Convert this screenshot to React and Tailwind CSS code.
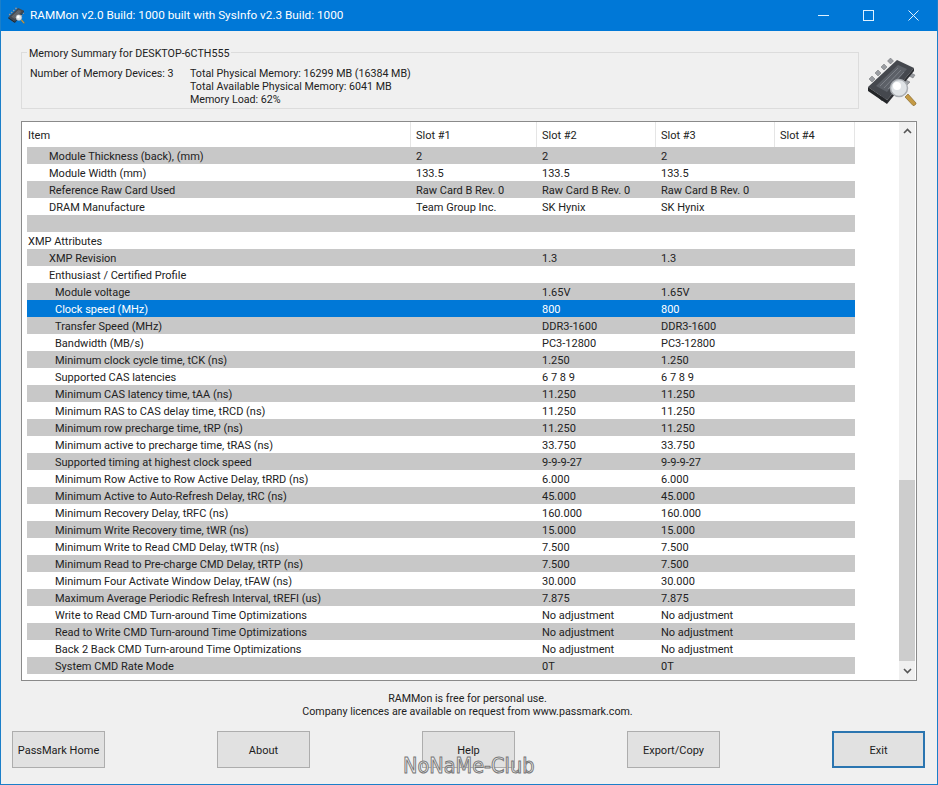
import React from "react";

const rows = [
	{ item: "Module Thickness (back), (mm)", lvl: 1, s: ["2", "2", "2"] },
	{ item: "Module Width (mm)", lvl: 1, s: ["133.5", "133.5", "133.5"] },
	{ item: "Reference Raw Card Used", lvl: 1, s: ["Raw Card B Rev. 0", "Raw Card B Rev. 0", "Raw Card B Rev. 0"] },
	{ item: "DRAM Manufacture", lvl: 1, s: ["Team Group Inc.", "SK Hynix", "SK Hynix"] },
	{ item: "", lvl: 0, s: ["", "", ""] },
	{ item: "XMP Attributes", lvl: 0, s: ["", "", ""] },
	{ item: "XMP Revision", lvl: 1, s: ["", "1.3", "1.3"] },
	{ item: "Enthusiast / Certified Profile", lvl: 1, s: ["", "", ""] },
	{ item: "Module voltage", lvl: 2, s: ["", "1.65V", "1.65V"] },
	{ item: "Clock speed (MHz)", lvl: 2, s: ["", "800", "800"], selected: true },
	{ item: "Transfer Speed (MHz)", lvl: 2, s: ["", "DDR3-1600", "DDR3-1600"] },
	{ item: "Bandwidth (MB/s)", lvl: 2, s: ["", "PC3-12800", "PC3-12800"] },
	{ item: "Minimum clock cycle time, tCK (ns)", lvl: 2, s: ["", "1.250", "1.250"] },
	{ item: "Supported CAS latencies", lvl: 2, s: ["", "6 7 8 9", "6 7 8 9"] },
	{ item: "Minimum CAS latency time, tAA (ns)", lvl: 2, s: ["", "11.250", "11.250"] },
	{ item: "Minimum RAS to CAS delay time, tRCD (ns)", lvl: 2, s: ["", "11.250", "11.250"] },
	{ item: "Minimum row precharge time, tRP (ns)", lvl: 2, s: ["", "11.250", "11.250"] },
	{ item: "Minimum active to precharge time, tRAS (ns)", lvl: 2, s: ["", "33.750", "33.750"] },
	{ item: "Supported timing at highest clock speed", lvl: 2, s: ["", "9-9-9-27", "9-9-9-27"] },
	{ item: "Minimum Row Active to Row Active Delay, tRRD (ns)", lvl: 2, s: ["", "6.000", "6.000"] },
	{ item: "Minimum Active to Auto-Refresh Delay, tRC (ns)", lvl: 2, s: ["", "45.000", "45.000"] },
	{ item: "Minimum Recovery Delay, tRFC (ns)", lvl: 2, s: ["", "160.000", "160.000"] },
	{ item: "Minimum Write Recovery time, tWR (ns)", lvl: 2, s: ["", "15.000", "15.000"] },
	{ item: "Minimum Write to Read CMD Delay, tWTR (ns)", lvl: 2, s: ["", "7.500", "7.500"] },
	{ item: "Minimum Read to Pre-charge CMD Delay, tRTP (ns)", lvl: 2, s: ["", "7.500", "7.500"] },
	{ item: "Minimum Four Activate Window Delay, tFAW (ns)", lvl: 2, s: ["", "30.000", "30.000"] },
	{ item: "Maximum Average Periodic Refresh Interval, tREFI (us)", lvl: 2, s: ["", "7.875", "7.875"] },
	{ item: "Write to Read CMD Turn-around Time Optimizations", lvl: 2, s: ["", "No adjustment", "No adjustment"] },
	{ item: "Read to Write CMD Turn-around Time Optimizations", lvl: 2, s: ["", "No adjustment", "No adjustment"] },
	{ item: "Back 2 Back CMD Turn-around Time Optimizations", lvl: 2, s: ["", "No adjustment", "No adjustment"] },
	{ item: "System CMD Rate Mode", lvl: 2, s: ["", "0T", "0T"] },
];

const indent = ["pl-[1px]", "pl-[22px]", "pl-[28px]"];

const ChipIcon = ({ className }) => (
	<svg viewBox="0 0 50 50" className={className}>
		<g fill="#9a9da2" stroke="#55585c" strokeWidth="0.4">
			<path d="M5 25l-3-3 3-3 3 3z" />
			<path d="M11 19l-3-3 3-3 3 3z" />
			<path d="M17 13l-3-3 3-3 3 3z" />
			<path d="M23.500 7l-3-3 3-3 3 3z" />
			<path d="M12 41l3 3 3-3-3-3z" />
			<path d="M36 26l4 2 3-3-4-2z" />
			<path d="M42 19l4 2 2-3-4-2z" />
		</g>
		<path d="M1 30L30 3l17 8-27 32z" fill="#45484e" />
		<path d="M1 30l19 13v4L1 34z" fill="#232528" />
		<path d="M20 43l27-32v3L20 47z" fill="#2c2e32" />
		<path d="M9 29L31 8l9 4-20 23z" fill="#5c6067" />
		<path d="M13 29L31 11M17 31L34 13M21 32L37 15" stroke="#8a8e95" strokeWidth="0.7" />
		<path d="M38 40l3-3 8 9c.5 1-1.500 3-3 2.500z" fill="#c49a45" stroke="#7a5c20" strokeWidth="0.6" />
		<circle cx="32" cy="31" r="8.500" fill="#dfe3e6" stroke="#a9adb2" strokeWidth="1.500" />
		<circle cx="30" cy="29" r="4" fill="#ffffff" />
	</svg>
);

const Btn = ({ children, exit }) => (
	<button
		className={
			exit
				? "w-[93px] h-[37px] pt-px bg-[#e1e1e1] border-2 border-[#2b75b0] text-[#1c1c1c]"
				: "w-[93px] h-[37px] pt-px bg-[#e1e1e1] border border-[#adadad] text-[#1c1c1c]"
		}
	>
		{children}
	</button>
);

export default function App() {
	return (
		<div className="relative w-[938px] h-[785px] flex flex-col bg-[#f0f0f0] border-x border-b border-[#1b7fc9] font-['Roboto',sans-serif] text-[11px] leading-[13px] text-[#222] overflow-hidden">
			<div className="h-[31px] -mx-px bg-[#0078d7] flex items-center text-white shrink-0">
				<ChipIcon className="w-[17px] h-[17px] ml-[8px]" />
				<span className="ml-[5px] text-[11.75px]">
					RAMMon v2.0 Build: 1000 built with SysInfo v2.3 Build: 1000
				</span>
				<div className="ml-auto mr-[2px] flex">
					<div className="w-[45px] h-[31px] flex items-center justify-center">
						<svg width="11" height="11" viewBox="0 0 11 11">
							<path d="M0 5.500h11" stroke="#dff1ff" />
						</svg>
					</div>
					<div className="w-[45px] h-[31px] flex items-center justify-center">
						<svg width="11" height="11" viewBox="0 0 11 11">
							<rect x="0.500" y="0.500" width="10" height="10" fill="none" stroke="#dff1ff" />
						</svg>
					</div>
					<div className="w-[45px] h-[31px] flex items-center justify-center">
						<svg width="11" height="11" viewBox="0 0 11 11">
							<path d="M0.500 0.500l10 10M10.500 0.500l-10 10" stroke="#dff1ff" />
						</svg>
					</div>
				</div>
			</div>

			<div className="flex mt-[21px] ml-[20px] shrink-0">
				<div className="relative w-[838px] h-[57px] border border-[#dcdcdc] text-[10.7px]">
					<div className="absolute -top-[6px] left-[5px] px-[2px] bg-[#f0f0f0]">
						Memory Summary for DESKTOP-6CTH555
					</div>
					<div className="flex pt-[14px] pl-[8px]">
						<div className="w-[160px]">Number of Memory Devices: 3</div>
						<div>
							<div>Total Physical Memory: 16299 MB (16384 MB)</div>
							<div>Total Available Physical Memory: 6041 MB</div>
							<div>Memory Load: 62%</div>
						</div>
					</div>
				</div>
				<ChipIcon className="w-[50px] h-[50px] ml-[8px] mt-[5px]" />
			</div>

			<div className="flex w-[896px] h-[560px] ml-[20px] mt-[12px] bg-white border border-[#8a8a8a] shrink-0">
				<div className="w-[877px] pl-[5px]">
					<div className="flex h-[25px] w-[828px] items-center">
						<div className="w-[384px] h-full flex items-center pt-px pl-[1px] border-r border-[#e5e5e5]">Item</div>
						<div className="w-[126px] h-full flex items-center pt-px pl-[5px] border-r border-[#e5e5e5]">Slot #1</div>
						<div className="w-[119px] h-full flex items-center pt-px pl-[5px] border-r border-[#e5e5e5]">Slot #2</div>
						<div className="w-[119px] h-full flex items-center pt-px pl-[5px] border-r border-[#e5e5e5]">Slot #3</div>
						<div className="w-[80px] h-full flex items-center pt-px pl-[5px] border-r border-[#e5e5e5]">Slot #4</div>
					</div>
					{rows.map((r, i) => (
						<div
							key={i}
							className={
								r.selected
									? "flex w-[828px] h-[17px] pt-px items-center bg-[#0078d7] text-white"
									: i % 2 === 0
										? "flex w-[828px] h-[17px] pt-px items-center bg-[#c8c8c8]"
										: "flex w-[828px] h-[17px] pt-px items-center bg-white"
							}
						>
							<div className={"w-[383px] " + indent[r.lvl]}>{r.item}</div>
							<div className="w-[126px] pl-[6px]">{r.s[0]}</div>
							<div className="w-[119px] pl-[6px]">{r.s[1]}</div>
							<div className="w-[119px] pl-[6px]">{r.s[2]}</div>
						</div>
					))}
				</div>
				<div className="w-[16px] h-[558px] bg-[#f0f0f0] flex flex-col">
					<div className="h-[17px] flex items-center justify-center">
						<svg width="9" height="6" viewBox="0 0 9 6">
							<path d="M1 5l3.500-3.500L8 5" fill="none" stroke="#555" strokeWidth="1.600" />
						</svg>
					</div>
					<div className="flex-1" />
					<div className="h-[181px] bg-[#cdcdcd]" />
					<div className="h-[19px] flex items-center justify-center">
						<svg width="9" height="6" viewBox="0 0 9 6">
							<path d="M1 1l3.500 3.500L8 1" fill="none" stroke="#555" strokeWidth="1.600" />
						</svg>
					</div>
				</div>
			</div>

			<div className="mt-[11px] pr-[3px] text-center text-[10.7px] shrink-0">
				<div>RAMMon is free for personal use.</div>
				<div>Company licences are available on request from www.passmark.com.</div>
			</div>

			<div className="flex justify-between mt-[13px] pl-[11px] pr-[12px] shrink-0">
				<Btn>PassMark Home</Btn>
				<Btn>About</Btn>
				<Btn>Help</Btn>
				<Btn>Export/Copy</Btn>
				<Btn exit>Exit</Btn>
			</div>

			<div className="absolute left-[402px] top-[754px] origin-left scale-x-[0.92] font-['DejaVu_Sans',sans-serif] text-[21px] leading-[24px] text-[#f2f2f2] [-webkit-text-stroke:1px_#777777]">
				NoNaMe-Club
			</div>
		</div>
	);
}
